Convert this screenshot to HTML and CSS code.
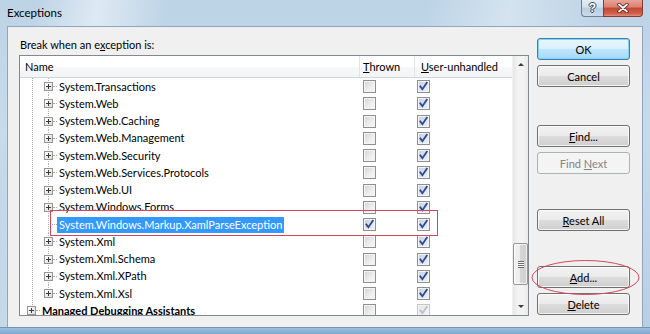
FILE: index.html
```html
<!DOCTYPE html>
<html>
<head>
<meta charset="utf-8">
<title>Exceptions</title>
<link rel="stylesheet" href="styles.css">
</head>
<body>
<svg class="defs" width="0" height="0">
  <symbol id="chk" viewBox="0 0 11 11">
    <path d="M2.3 5.4 L4.4 8.2 L8.8 1.8" fill="none" stroke-width="1.8" stroke-linecap="square"/>
  </symbol>
</svg>
<div class="window">
  <div class="titlebar">
    <span class="title">Exceptions</span>
    <div class="caption">
      <div class="cap help">?</div>
      <div class="cap close">
        <svg width="12" height="10" viewBox="0 0 12 10">
          <path d="M2 1.5 L10 8.5 M10 1.5 L2 8.5" stroke="#4a1a14" stroke-width="3.4" stroke-linecap="round"/>
          <path d="M2 1.5 L10 8.5 M10 1.5 L2 8.5" stroke="#ffffff" stroke-width="1.8" stroke-linecap="round"/>
        </svg>
      </div>
    </div>
  </div>
  <div class="client">
    <div class="left">
      <div class="label">Break when an e<u>x</u>ception is:</div>
      <div class="list">
        <div class="list-main">
          <div class="header">
            <div class="hc c-name">Name</div>
            <div class="hc c-thrown"><span><u>T</u>hrown</span></div>
            <div class="hc c-user"><span><u>U</u>ser-unhandled</span></div>
          </div>
          <div class="rows">
            <div class="row child"><div class="c-name"><span class="ind"></span><span class="pb"></span><span class="conn"></span><span class="txt">System.Transactions</span></div><div class="c-thrown"><span class="cb"></span></div><div class="c-user"><span class="cb on"><svg><use href="#chk"/></svg></span></div></div>
            <div class="row child"><div class="c-name"><span class="ind"></span><span class="pb"></span><span class="conn"></span><span class="txt">System.Web</span></div><div class="c-thrown"><span class="cb"></span></div><div class="c-user"><span class="cb on"><svg><use href="#chk"/></svg></span></div></div>
            <div class="row child"><div class="c-name"><span class="ind"></span><span class="pb"></span><span class="conn"></span><span class="txt">System.Web.Caching</span></div><div class="c-thrown"><span class="cb"></span></div><div class="c-user"><span class="cb on"><svg><use href="#chk"/></svg></span></div></div>
            <div class="row child"><div class="c-name"><span class="ind"></span><span class="pb"></span><span class="conn"></span><span class="txt">System.Web.Management</span></div><div class="c-thrown"><span class="cb"></span></div><div class="c-user"><span class="cb on"><svg><use href="#chk"/></svg></span></div></div>
            <div class="row child"><div class="c-name"><span class="ind"></span><span class="pb"></span><span class="conn"></span><span class="txt">System.Web.Security</span></div><div class="c-thrown"><span class="cb"></span></div><div class="c-user"><span class="cb on"><svg><use href="#chk"/></svg></span></div></div>
            <div class="row child"><div class="c-name"><span class="ind"></span><span class="pb"></span><span class="conn"></span><span class="txt">System.Web.Services.Protocols</span></div><div class="c-thrown"><span class="cb"></span></div><div class="c-user"><span class="cb on"><svg><use href="#chk"/></svg></span></div></div>
            <div class="row child"><div class="c-name"><span class="ind"></span><span class="pb"></span><span class="conn"></span><span class="txt">System.Web.UI</span></div><div class="c-thrown"><span class="cb"></span></div><div class="c-user"><span class="cb on"><svg><use href="#chk"/></svg></span></div></div>
            <div class="row child"><div class="c-name"><span class="ind"></span><span class="pb"></span><span class="conn"></span><span class="txt">System.Windows.Forms</span></div><div class="c-thrown"><span class="cb"></span></div><div class="c-user"><span class="cb on"><svg><use href="#chk"/></svg></span></div></div>
            <div class="row child"><div class="c-name"><span class="ind leaf"></span><span class="conn long"></span><span class="txt sel">System.Windows.Markup.XamlParseException</span></div><div class="c-thrown"><span class="cb on"><svg><use href="#chk"/></svg></span></div><div class="c-user"><span class="cb on"><svg><use href="#chk"/></svg></span></div></div>
            <div class="row child"><div class="c-name"><span class="ind"></span><span class="pb"></span><span class="conn"></span><span class="txt">System.Xml</span></div><div class="c-thrown"><span class="cb"></span></div><div class="c-user"><span class="cb on"><svg><use href="#chk"/></svg></span></div></div>
            <div class="row child"><div class="c-name"><span class="ind"></span><span class="pb"></span><span class="conn"></span><span class="txt">System.Xml.Schema</span></div><div class="c-thrown"><span class="cb"></span></div><div class="c-user"><span class="cb on"><svg><use href="#chk"/></svg></span></div></div>
            <div class="row child"><div class="c-name"><span class="ind"></span><span class="pb"></span><span class="conn"></span><span class="txt">System.Xml.XPath</span></div><div class="c-thrown"><span class="cb"></span></div><div class="c-user"><span class="cb on"><svg><use href="#chk"/></svg></span></div></div>
            <div class="row child last"><div class="c-name"><span class="ind"></span><span class="pb"></span><span class="conn"></span><span class="txt">System.Xml.Xsl</span></div><div class="c-thrown"><span class="cb"></span></div><div class="c-user"><span class="cb on"><svg><use href="#chk"/></svg></span></div></div>
            <div class="row top"><div class="c-name"><span class="ind top"></span><span class="pb"></span><span class="conn"></span><span class="txt bold">Managed Debugging Assistants</span></div><div class="c-thrown"><span class="cb"></span></div><div class="c-user"><span class="cb on faint"><svg><use href="#chk"/></svg></span></div></div>
          </div>
        </div>
        <div class="vscroll">
          <div class="sb-btn"><span class="arrow up"></span></div>
          <div class="sb-track"><div class="thumb"><span class="grip"></span></div></div>
          <div class="sb-btn"><span class="arrow down"></span></div>
        </div>
      </div>
    </div>
    <div class="buttons">
      <div class="btn default"><span>OK</span></div>
      <div class="btn"><span>Cancel</span></div>
      <div class="btn gap-find"><span><u>F</u>ind...</span></div>
      <div class="btn disabled"><span>Find <u>N</u>ext</span></div>
      <div class="btn gap-reset"><span><u>R</u>eset All</span></div>
      <div class="btn gap-add"><span><u>A</u>dd...</span></div>
      <div class="btn"><span><u>D</u>elete</span></div>
    </div>
  </div>
</div>
<div class="annot-rect"></div>
<svg class="annot-ellipse" width="109" height="37" viewBox="0 0 109 37">
  <ellipse cx="54.5" cy="18.5" rx="53.5" ry="17" fill="none" stroke="#d2495c" stroke-width="1"/>
</svg>
</body>
</html>
```

FILE: styles.css
```css
* { box-sizing: border-box; }

html, body {
  margin: 0;
  padding: 0;
}

body {
  width: 650px;
  height: 334px;
  overflow: hidden;
  position: relative;
  font-family: Lato, "Noto Sans", sans-serif;
  font-size: 11px;
  color: #000;
}

.defs { position: absolute; width: 0; height: 0; }

.window {
  height: 334px;
  display: flex;
  flex-direction: column;
  background:
    linear-gradient(180deg, rgba(0,0,0,0) 327px, #6f94b8 327px, #6f94b8 328px, #9fc0de 328px, #7fa8cf 334px),
    linear-gradient(100deg, rgba(255,255,255,0) 5%, rgba(255,255,255,0.5) 14%, rgba(255,255,255,0) 24%, rgba(255,255,255,0) 60%, rgba(255,255,255,0.35) 72%, rgba(255,255,255,0) 85%),
    linear-gradient(180deg, #bcd3e6 0%, #c8dbea 40%, #b8cfe3 100%);
}

.titlebar {
  height: 26px;
  display: flex;
  align-items: flex-start;
}

.title {
  padding-left: 7px;
  line-height: 26px;
  font-size: 11.5px;
}

.caption {
  margin-left: auto;
  margin-right: 7px;
  display: flex;
}

.cap {
  height: 17px;
  display: flex;
  align-items: center;
  justify-content: center;
  border: 1px solid #6d7f96;
  border-top: none;
}

.help {
  width: 22px;
  border-radius: 0 0 0 4px;
  border-right: none;
  background: linear-gradient(180deg, #e3ecf4 0%, #d2e0ec 45%, #b9cde0 50%, #c9dbeb 100%);
  color: #fff;
  font-weight: bold;
  font-size: 12px;
  font-family: "Liberation Sans", sans-serif;
  text-shadow: 0 0 1px #2b3c52, 1px 0 0 #3b4c62, -1px 0 0 #3b4c62, 0 1px 0 #3b4c62, 0 -1px 0 #3b4c62;
}

.close {
  width: 40px;
  border-radius: 0 0 4px 0;
  background: linear-gradient(180deg, #e8a497 0%, #d8806f 45%, #c3462f 50%, #d2604a 85%, #e0907e 100%);
  border-color: #8a3a2e;
}

.client {
  flex: 1;
  margin: 0 7px 7px 7px;
  border: 1px solid #8ea6bd;
  border-bottom: none;
  background: #f0f0f0;
  display: flex;
  padding: 10px 12px 0 11px;
}

.left {
  width: 510px;
  display: flex;
  flex-direction: column;
}

.label {
  line-height: 15px;
  height: 15px;
  margin-bottom: 3px;
  padding-left: 1px;
}

.list {
  height: 261px;
  border: 1px solid #828790;
  background: #fff;
  display: flex;
  overflow: hidden;
}

.list-main {
  flex: 1;
  display: flex;
  flex-direction: column;
  overflow: hidden;
}

.header {
  height: 22px;
  display: flex;
  border-bottom: 1px solid #d5d5d5;
  background: linear-gradient(180deg, #ffffff 0%, #ffffff 50%, #f7f8f9 50%, #f3f4f5 100%);
}

.hc {
  line-height: 21px;
  border-right: 1px solid #e3e3e3;
}

.c-name { width: 340px; display: flex; align-items: center; }
.c-thrown { width: 55px; display: flex; align-items: center; }
.c-user { flex: 1; display: flex; align-items: center; }

.header .c-name { padding-left: 5px; }
.header .c-thrown { padding-left: 3px; }
.header .c-user { padding-left: 6px; border-right: none; }

.rows {
  flex: 1;
  background: repeating-linear-gradient(180deg, #a8a8a8 0 1px, rgba(0,0,0,0) 1px 2px) 12px 0 / 1px 100% no-repeat;
}

.row {
  height: 17.25px;
  display: flex;
}

.row.child .c-name {
  background: repeating-linear-gradient(180deg, #b4b4b4 0 1px, rgba(0,0,0,0) 1px 2px) 28px 0 / 1px 100% no-repeat;
}

.row.child.last .c-name {
  background-size: 1px 50%;
}

.ind { width: 24px; flex: none; }
.ind.leaf { width: 28px; }
.ind.top { width: 7px; }

.pb {
  width: 9px;
  height: 9px;
  flex: none;
  border: 1px solid #959595;
  background:
    linear-gradient(#3a3a3a, #3a3a3a) 1px 3px / 5px 1px no-repeat,
    linear-gradient(#3a3a3a, #3a3a3a) 3px 1px / 1px 5px no-repeat,
    linear-gradient(135deg, #ffffff, #dcdcdc);
}

.conn {
  width: 4px;
  height: 0;
  flex: none;
  border-top: 1px dotted #a8a8a8;
}

.conn.long { width: 9px; }

.txt {
  padding: 0 2px;
  line-height: 16px;
  white-space: nowrap;
}

.txt.sel {
  background: #3399ff;
  color: #fff;
}

.txt.bold { font-weight: bold; }

.c-thrown .cb { margin-left: 3px; }
.c-user .cb { margin-left: 2px; }

.cb {
  width: 13px;
  height: 13px;
  border: 1px solid #8e8f8f;
  box-shadow: inset 0 0 0 1px #f4f4f4;
  background: linear-gradient(135deg, #d0d3d7 0%, #eeeeee 60%, #f6f6f6 100%);
  display: block;
}

.cb.on {
  background: linear-gradient(135deg, #c3cee2 0%, #dfe6f2 60%, #eef2f8 100%);
}

.cb svg {
  display: block;
  width: 11px;
  height: 11px;
  stroke: #2f4a8e;
}

.cb.faint { background: linear-gradient(135deg, #e3e5e8, #f7f7f7); border-color: #c5c6c7; }
.cb.faint svg { stroke: #b9c0cc; }

.vscroll {
  width: 16px;
  display: flex;
  flex-direction: column;
  background: linear-gradient(90deg, #e6e6e6 0%, #f3f3f3 30%, #f3f3f3 70%, #e9e9e9 100%);
  border-left: 1px solid #f0f0f0;
}

.sb-btn {
  height: 17px;
  display: flex;
  align-items: center;
  justify-content: center;
}

.arrow {
  width: 0;
  height: 0;
  border-left: 3px solid transparent;
  border-right: 3px solid transparent;
}

.arrow.up { border-bottom: 3px solid #3c3c3c; }
.arrow.down { border-top: 3px solid #3c3c3c; }

.sb-track { flex: 1; }

.thumb {
  margin-top: 170px;
  height: 42px;
  border: 1px solid #959595;
  border-radius: 2px;
  background: linear-gradient(90deg, #f2f2f2 0%, #ebebeb 50%, #d6d6d6 50%, #cfcfcf 100%);
  box-shadow: inset 0 0 0 1px rgba(255,255,255,0.7);
  display: flex;
  align-items: center;
  justify-content: center;
}

.grip {
  width: 6px;
  height: 7px;
  background: repeating-linear-gradient(180deg, #6a6a6a 0 1px, #fafafa 1px 2px);
}

.buttons {
  margin-left: 8px;
  width: 93px;
  padding-top: 1px;
  display: flex;
  flex-direction: column;
}

.btn {
  height: 22px;
  flex: none;
  margin-bottom: 5px;
  border: 1px solid #707070;
  border-radius: 3px;
  background: linear-gradient(180deg, #f2f2f2 0%, #ebebeb 48%, #dddddd 50%, #cfcfcf 100%);
  box-shadow: inset 0 0 0 1px rgba(255,255,255,0.75);
  display: flex;
  align-items: center;
  justify-content: center;
  white-space: nowrap;
}

.btn.default {
  border-color: #3c7fb1;
  background: linear-gradient(180deg, #eaf6fd 0%, #d9f0fc 48%, #bee6fd 50%, #a7d9f5 100%);
  box-shadow: inset 0 0 0 1px #7ed3f7;
}

.btn.disabled {
  border-color: #adb2b5;
  background: #f4f4f4;
  box-shadow: none;
  color: #838383;
}

.btn.gap-find { margin-top: 33px; }
.btn.gap-reset { margin-top: 30px; }
.btn.gap-add { margin-top: 30px; }

.annot-rect {
  position: absolute;
  left: 50px;
  top: 210px;
  width: 388px;
  height: 26px;
  border: 1px solid #d2495c;
}

.annot-ellipse {
  position: absolute;
  left: 531px;
  top: 259px;
}
```
